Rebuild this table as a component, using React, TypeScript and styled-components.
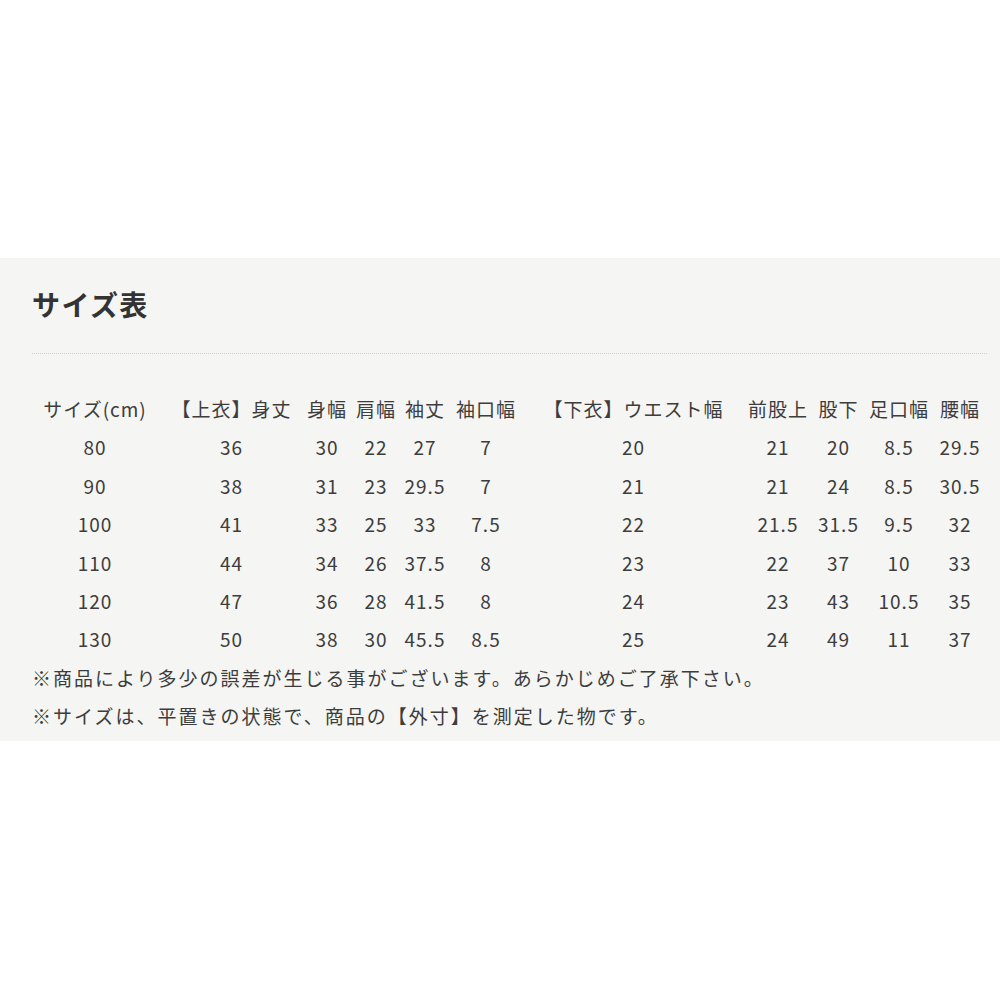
import React from "react";
import styled, { createGlobalStyle } from "styled-components";

const GlobalStyle = createGlobalStyle`
  html, body {
    margin: 0;
    padding: 0;
    background: #ffffff;
  }
  body {
    font-family: "Noto Sans CJK JP", "Noto Sans", sans-serif;
    color: #3a3a3a;
  }
`;

const Page = styled.div`
  width: 1000px;
  height: 1000px;
  padding-top: 258px;
  box-sizing: border-box;
`;

const Panel = styled.section`
  background: #f5f5f3;
  padding: 26px 13px 6px 32px;
`;

const Title = styled.h2`
  margin: 0;
  font-size: 28px;
  line-height: 40px;
  font-weight: 700;
  letter-spacing: 1.4px;
  color: #333333;
`;

const Divider = styled.hr`
  margin: 29px 0 36px;
  border: 0;
  border-top: 1px dotted #cfcfcc;
  height: 0;
`;

const Table = styled.table`
  table-layout: fixed;
  border-collapse: collapse;
  margin-left: -1px;
  width: 955px;
`;

const Cell = styled.td`
  padding: 0;
  height: 38.4px;
  text-align: center;
  white-space: nowrap;
  font-size: 19px;
  line-height: 38.4px;
  letter-spacing: 1px;
  color: #3d3d3d;
`;

const Note = styled.p`
  margin: 0;
  font-size: 19px;
  line-height: 38px;
  letter-spacing: 2px;
  color: #3d3d3d;
  white-space: nowrap;
`;

const colWidths = [128, 145, 46, 52, 46, 76, 219, 70, 51, 70, 52];

const header = [
  "サイズ(cm)",
  "【上衣】身丈",
  "身幅",
  "肩幅",
  "袖丈",
  "袖口幅",
  "【下衣】ウエスト幅",
  "前股上",
  "股下",
  "足口幅",
  "腰幅",
];

const rows = [
  ["80", "36", "30", "22", "27", "7", "20", "21", "20", "8.5", "29.5"],
  ["90", "38", "31", "23", "29.5", "7", "21", "21", "24", "8.5", "30.5"],
  ["100", "41", "33", "25", "33", "7.5", "22", "21.5", "31.5", "9.5", "32"],
  ["110", "44", "34", "26", "37.5", "8", "23", "22", "37", "10", "33"],
  ["120", "47", "36", "28", "41.5", "8", "24", "23", "43", "10.5", "35"],
  ["130", "50", "38", "30", "45.5", "8.5", "25", "24", "49", "11", "37"],
];

export default function App() {
  return (
    <>
      <GlobalStyle />
      <Page>
        <Panel>
          <Title>サイズ表</Title>
          <Divider />
          <Table>
            <colgroup>
              {colWidths.map((w, i) => (
                <col key={i} style={{ width: w }} />
              ))}
            </colgroup>
            <tbody>
              <tr>
                {header.map((h) => (
                  <Cell key={h}>{h}</Cell>
                ))}
              </tr>
              {rows.map((r, i) => (
                <tr key={i}>
                  {r.map((v, j) => (
                    <Cell key={j}>{v}</Cell>
                  ))}
                </tr>
              ))}
            </tbody>
          </Table>
          <Note>※商品により多少の誤差が生じる事がございます。あらかじめご了承下さい。</Note>
          <Note>※サイズは、平置きの状態で、商品の【外寸】を測定した物です。</Note>
        </Panel>
      </Page>
    </>
  );
}
